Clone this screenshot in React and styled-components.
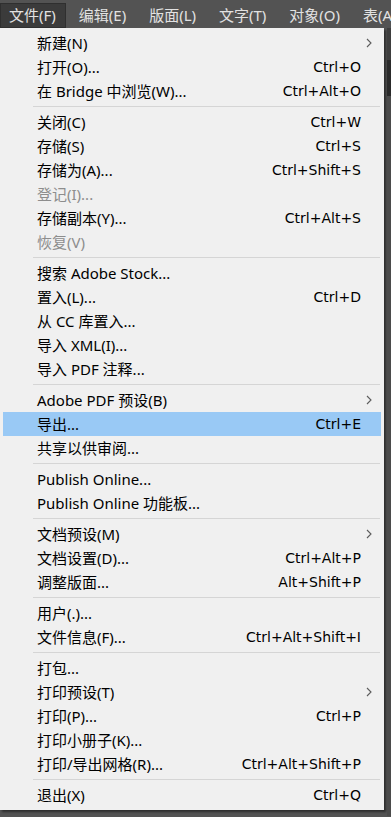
import React from 'react';
import styled, { createGlobalStyle } from 'styled-components';

const Global = createGlobalStyle`
  html, body {
    margin: 0;
    padding: 0;
    background: #535353;
    height: 100%;
    overflow: hidden;
  }
  body {
    font-family: "Noto Sans", "Noto Sans CJK SC", sans-serif;
  }
`;

const Page = styled.div`
  width: 391px;
  height: 817px;
  display: flex;
  flex-direction: column;
  background: #535353;
  overflow: hidden;
`;

const MenuBar = styled.div`
  height: 28px;
  display: flex;
  align-items: flex-end;
  background: #535353;
  white-space: nowrap;
  flex-shrink: 0;
`;

const BarItem = styled.div`
  height: 25px;
  line-height: 24px;
  padding-left: ${p => (p.$first ? '9px' : '13px')};
  padding-right: ${p => (p.$first ? '10px' : '10px')};
  font-size: 15px;
  color: #e2e2e2;
  box-sizing: border-box;
  background: ${p => (p.$open ? '#3b3b3b' : 'transparent')};
  box-shadow: ${p => (p.$open ? 'inset 0 0 0 1px #2f2f2f' : 'none')};
`;

const Body = styled.div`
  flex: 1;
  display: flex;
  align-items: flex-start;
`;

const Menu = styled.div`
  width: 384px;
  flex-shrink: 0;
  box-sizing: border-box;
  padding: 3px;
  background: #f0f0f0;
  box-shadow: 2px 2px 2px rgba(0, 0, 0, 0.45);
`;

const Side = styled.div`
  flex: 1;
  margin-left: 3px;
  display: flex;
  flex-direction: column;
`;

const SideBlock = styled.div`
  height: ${p => p.$h}px;
  background: ${p => p.$bg};
`;

const Row = styled.div`
  height: 24px;
  display: grid;
  grid-template-columns: 1fr auto 20px;
  align-items: center;
  padding-left: 34px;
  font-size: 15px;
  line-height: 24px;
  white-space: nowrap;
  color: ${p => (p.$disabled ? '#8d8d8d' : '#000')};
  background: ${p => (p.$active ? '#99c9f5' : 'transparent')};
`;

const Shortcut = styled.span`
  text-align: right;
  font-family: "DejaVu Sans", "Noto Sans", sans-serif;
  font-size: 14px;
`;

const Arrow = styled.svg`
  margin-left: 5px;
  display: block;
`;

const Separator = styled.div`
  height: 7px;
  margin-left: 30px;
  margin-right: 1px;
  position: relative;
  &::after {
    content: '';
    position: absolute;
    left: 0;
    right: 0;
    top: 3px;
    height: 1px;
    background: #d5d5d5;
  }
`;

const bar = ['文件(F)', '编辑(E)', '版面(L)', '文字(T)', '对象(O)', '表(A)'];

const items = [
  { label: '新建(N)', sub: true },
  { label: '打开(O)...', key: 'Ctrl+O' },
  { label: '在 Bridge 中浏览(W)...', key: 'Ctrl+Alt+O' },
  '-',
  { label: '关闭(C)', key: 'Ctrl+W' },
  { label: '存储(S)', key: 'Ctrl+S' },
  { label: '存储为(A)...', key: 'Ctrl+Shift+S' },
  { label: '登记(I)...', disabled: true },
  { label: '存储副本(Y)...', key: 'Ctrl+Alt+S' },
  { label: '恢复(V)', disabled: true },
  '-',
  { label: '搜索 Adobe Stock...' },
  { label: '置入(L)...', key: 'Ctrl+D' },
  { label: '从 CC 库置入...' },
  { label: '导入 XML(I)...' },
  { label: '导入 PDF 注释...' },
  '-',
  { label: 'Adobe PDF 预设(B)', sub: true },
  { label: '导出...', key: 'Ctrl+E', active: true },
  { label: '共享以供审阅...' },
  '-',
  { label: 'Publish Online...' },
  { label: 'Publish Online 功能板...' },
  '-',
  { label: '文档预设(M)', sub: true },
  { label: '文档设置(D)...', key: 'Ctrl+Alt+P' },
  { label: '调整版面...', key: 'Alt+Shift+P' },
  '-',
  { label: '用户(.)...' },
  { label: '文件信息(F)...', key: 'Ctrl+Alt+Shift+I' },
  '-',
  { label: '打包...' },
  { label: '打印预设(T)', sub: true },
  { label: '打印(P)...', key: 'Ctrl+P' },
  { label: '打印小册子(K)...' },
  { label: '打印/导出网格(R)...', key: 'Ctrl+Alt+Shift+P' },
  '-',
  { label: '退出(X)', key: 'Ctrl+Q' },
];

function Chevron() {
  return (
    <Arrow width="6" height="10" viewBox="0 0 6 10">
      <polyline points="1,1 5,5 1,9" fill="none" stroke="#5c5c5c" strokeWidth="1.1" />
    </Arrow>
  );
}

export default function App() {
  return (
    <Page>
      <Global />
      <MenuBar>
        {bar.map((b, i) => (
          <BarItem key={b} $first={i === 0} $open={i === 0}>{b}</BarItem>
        ))}
      </MenuBar>
      <Body>
        <Menu>
          {items.map((it, i) =>
            it === '-' ? (
              <Separator key={i} />
            ) : (
              <Row key={i} $disabled={it.disabled} $active={it.active}>
                <span>{it.label}</span>
                <Shortcut>{it.key || ''}</Shortcut>
                {it.sub ? <Chevron /> : <span />}
              </Row>
            )
          )}
        </Menu>
        <Side>
          <SideBlock $h={32} $bg="#3e3e3e" />
          <SideBlock $h={36} $bg="#2a2a2a" />
          <SideBlock $h={720} $bg="#4b4b4b" />
        </Side>
      </Body>
    </Page>
  );
}
